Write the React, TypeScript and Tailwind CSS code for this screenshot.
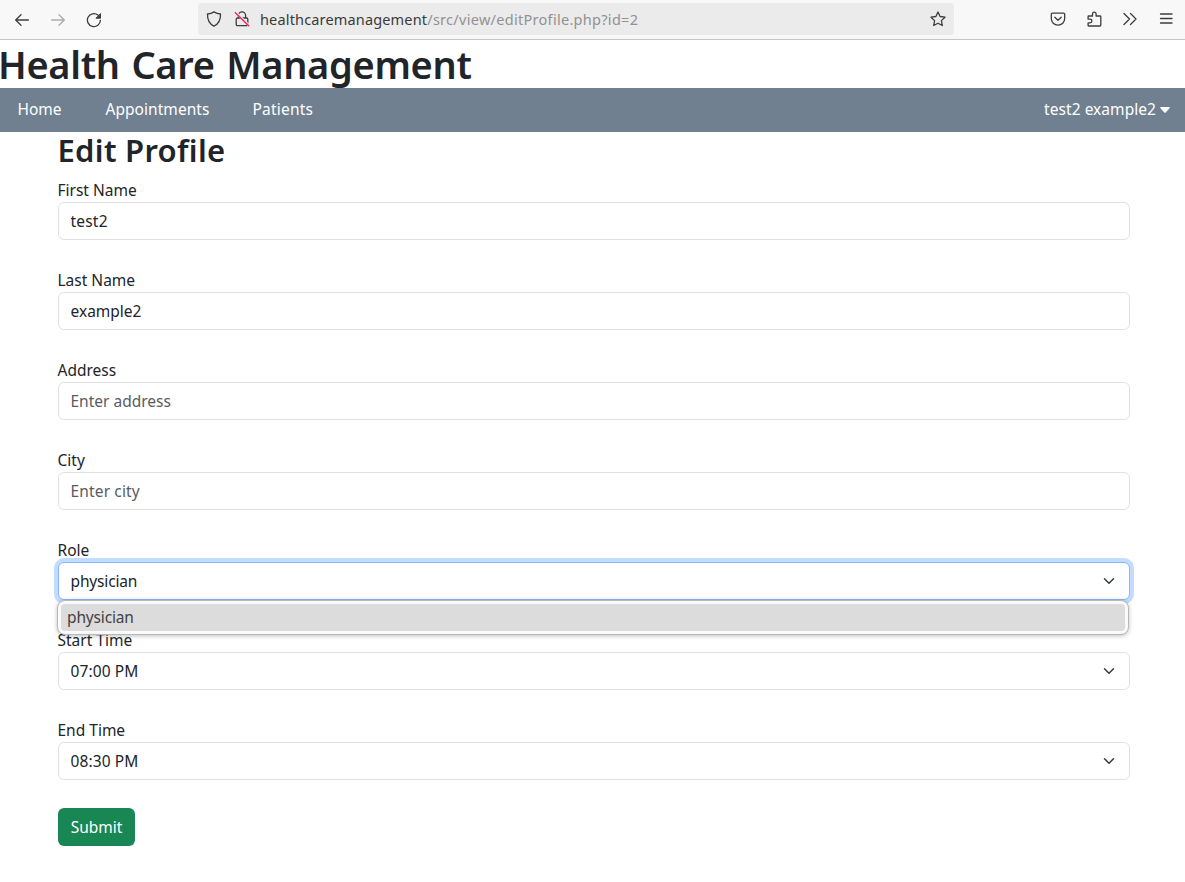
import type { ReactNode } from "react";

function Icon({ children, className = "" }: { children: ReactNode; className?: string }) {
  return (
    <svg
      viewBox="0 0 16 16"
      className={`size-4 shrink-0 ${className}`}
      fill="none"
      stroke="#3c3c3c"
      strokeWidth="1.3"
      strokeLinecap="round"
      strokeLinejoin="round"
    >
      {children}
    </svg>
  );
}

function Chevron() {
  return (
    <svg viewBox="0 0 16 16" className="h-3 w-4 shrink-0" fill="none" stroke="#343a40" strokeWidth="2" strokeLinecap="round" strokeLinejoin="round">
      <path d="m2 5 6 6 6-6" />
    </svg>
  );
}

function BrowserBar() {
  return (
    <div className="flex h-10 items-center border-b border-[#c6c6c6] bg-[#f8f8f8] pb-px">
      <div className="ml-3.5 flex gap-5 pt-px">
        <Icon>
          <path d="M14.4 8H1.800M7 2.700 1.700 8 7 13.300" />
        </Icon>
        <Icon className="opacity-40">
          <path d="M1.600 8h12.600M9 2.700 14.300 8 9 13.300" />
        </Icon>
        <Icon>
          <path d="M14.400 8.300A6.500 6.500 0 1 1 11.900 3" />
          <path d="M14.500 2v4.200h-4.200z" fill="#3c3c3c" strokeWidth="1" />
        </Icon>
      </div>
      <div className="ml-24 flex h-8 w-[756px] items-center rounded bg-[#ebebeb] pr-2 pl-2">
        <Icon>
          <path d="M8 .9C6.100 2.200 3.700 2.900 1.500 3c-.2 5.300 1.700 9.800 6.500 12.200C12.800 12.800 14.700 8.300 14.500 3 12.300 2.900 9.900 2.200 8 .9z" />
        </Icon>
        <Icon className="ml-3">
          <path d="M4.400 7V4.500a3.600 3.600 0 0 1 7.200 0V7M3.500 7h9a1.300 1.300 0 0 1 1.300 1.300v5a1.300 1.300 0 0 1-1.300 1.300h-9a1.300 1.300 0 0 1-1.300-1.300v-5A1.300 1.300 0 0 1 3.500 7z" />
          <path d="m1.800 1.300 13.200 13" stroke="#ebebeb" strokeWidth="2.500" />
          <path d="m1.300 1.800 13.400 13" stroke="#ff1f55" strokeWidth="1.400" />
        </Icon>
        <div className="ml-2.5 flex text-[14.5px] leading-5">
          <span className="tracking-[0.16px] text-[#3a3a3a]">healthcaremanagement</span>
          <span className="tracking-[0.29px] text-[#929292]">/src/view/editProfile.php?id=2</span>
        </div>
        <Icon className="ml-auto">
          <path d="m8 1 2.100 4.500 4.900.7-3.600 3.400.9 4.900L8 12.200l-4.300 2.300.9-4.900L1 6.200l4.900-.7z" />
        </Icon>
      </div>
      <div className="mr-[11px] ml-auto flex items-center gap-5">
        <Icon>
          <path d="M2.500 2.200h11a1.200 1.200 0 0 1 1.200 1.200v4.100a6.700 6.700 0 0 1-13.400 0V3.400a1.200 1.200 0 0 1 1.200-1.200z" />
          <path d="M4.800 6.200 8 9.300l3.200-3.100" />
        </Icon>
        <Icon>
          <path d="M2.700 15h11.300a.8.800 0 0 0 .8-.8V5.800a.8.800 0 0 0-.8-.8H10.100V3a1.800 1.800 0 0 0-3.600 0v2H2.700a.6.600 0 0 0-.6.600v2.600h2a1.800 1.800 0 0 1 0 3.600h-2v2.600a.6.600 0 0 0 .6.600z" />
        </Icon>
        <Icon>
          <path d="m2 2.500 5.500 5.500L2 13.500M8.500 2.500 14 8l-5.500 5.500" />
        </Icon>
        <Icon>
          <path d="M2.500 3h11.500M2.500 7.500h11.500M2.500 12h11.500" />
        </Icon>
      </div>
    </div>
  );
}

function Field({ label, children }: { label: string; children: ReactNode }) {
  return (
    <div className="mb-7">
      <label className="-ml-[0.5px] block h-6 leading-6">{label}</label>
      {children}
    </div>
  );
}

const box = "flex h-[38px] items-center rounded-md border bg-white pr-3 pl-[11.5px] leading-6";

function TextBox({ value, placeholder, className = "" }: { value?: string; placeholder?: string; className?: string }) {
  return (
    <input
      defaultValue={value}
      placeholder={placeholder}
      className={`${box} w-full border-[#dee2e6] outline-none placeholder:text-[#595c5f] ${className}`}
    />
  );
}

function SelectBox({ value, focused = false }: { value: string; focused?: boolean }) {
  return (
    <div
      className={`${box} justify-between ${focused ? "border-[#86b7fe] tracking-[-0.15px] ring-4 ring-[#c2dbfe]" : "border-[#dee2e6] tracking-[0.1px]"}`}
    >
      <span>{value}</span>
      <Chevron />
    </div>
  );
}

export default function App() {
  return (
    <div className="h-[882px] bg-white font-['Noto_Sans','Open_Sans',sans-serif] text-[15.5px] leading-6 text-[#212529]">
      <BrowserBar />
      <h1 className="h-12 -indent-[2px] text-[38px] leading-[49px] font-semibold tracking-[-0.3px] whitespace-nowrap [word-spacing:2px]">
        Health Care Management
      </h1>
      <nav className="flex h-11 items-center bg-[#708090] pr-[15px] pb-[2px] pl-[17.5px] text-white">
        <a className="w-[88px]">Home</a>
        <a className="w-[147px] tracking-[0.05px]">Appointments</a>
        <a className="tracking-[0.2px]">Patients</a>
        <div className="ml-auto flex items-center gap-1">
          <span className="tracking-[0.05px]">test2 example2</span>
          <svg viewBox="0 0 10 6" className="mt-0.5 h-1.5 w-2.5" fill="white">
            <path d="M.8 0h8.400q.9.100.5 1L5.700 5.400q-.7.700-1.400 0L.300 1Q-.1.100.8 0z" />
          </svg>
        </div>
      </nav>
      <main className="mr-[55px] ml-[58px]">
        <h2 className="-ml-[0.5px] mb-2 h-[38px] text-[31px] leading-[36px] font-semibold tracking-[0.3px]">Edit Profile</h2>
        <Field label="First Name">
          <TextBox value="test2" className="tracking-[0.2px]" />
        </Field>
        <Field label="Last Name">
          <TextBox value="example2" />
        </Field>
        <Field label="Address">
          <TextBox placeholder="Enter address" />
        </Field>
        <Field label="City">
          <TextBox placeholder="Enter city" className="tracking-[0.15px]" />
        </Field>
        <Field label="Role">
          <div className="relative">
            <SelectBox value="physician" focused />
            <div className="absolute top-[38px] right-px -left-px z-10 h-[35px] rounded-lg border border-[#b8b8b8] bg-[#fafafa] p-[3px] shadow-[0_1px_4px_rgba(0,0,0,0.25)]">
              <div className="h-[27px] rounded bg-[#dcdcdc] pl-1.5 leading-[26px] tracking-[-0.15px] text-[#424245]">physician</div>
            </div>
          </div>
        </Field>
        <Field label="Start Time">
          <SelectBox value="07:00 PM" />
        </Field>
        <Field label="End Time">
          <SelectBox value="08:30 PM" />
        </Field>
        <button className="block h-[38px] w-[77px] rounded-md bg-[#198754] text-center text-white">Submit</button>
      </main>
    </div>
  );
}
